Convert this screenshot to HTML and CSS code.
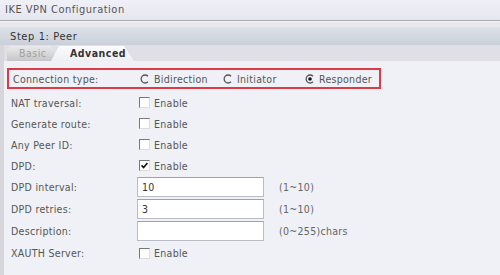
FILE: index.html
```html
<!DOCTYPE html>
<html>
<head>
<meta charset="utf-8">
<link rel="stylesheet" href="styles.css">
</head>
<body>
<div class="frame">
  <div class="titlebar">IKE VPN Configuration</div>
  <div class="band"></div>
  <div class="step">Step 1: Peer</div>
  <div class="tabs">
    <div class="tab basic">Basic</div>
    <div class="tab active">Advanced</div>
  </div>
  <div class="content">
    <div class="row hl">
      <div class="label">Connection type:</div>
      <div class="ctrl">
        <span class="opt w83"><svg class="radio" width="10" height="10" viewBox="0 0 10 10"><path d="M8 2.2A4 4 0 1 0 8 7.8" fill="none" stroke="#555" stroke-width="1.3"/></svg>Bidirection</span>
        <span class="opt w82"><svg class="radio" width="10" height="10" viewBox="0 0 10 10"><path d="M8 2.2A4 4 0 1 0 8 7.8" fill="none" stroke="#555" stroke-width="1.3"/></svg>Initiator</span>
        <span class="opt"><svg class="radio" width="10" height="10" viewBox="0 0 10 10"><path d="M8 2.2A4 4 0 1 0 8 7.8" fill="none" stroke="#555" stroke-width="1.3"/><circle cx="5" cy="5" r="1.8" fill="#111"/></svg>Responder</span>
      </div>
    </div>
    <div class="row">
      <div class="label">NAT traversal:</div>
      <div class="ctrl"><span class="cb"></span>Enable</div>
    </div>
    <div class="row">
      <div class="label">Generate route:</div>
      <div class="ctrl"><span class="cb"></span>Enable</div>
    </div>
    <div class="row">
      <div class="label">Any Peer ID:</div>
      <div class="ctrl"><span class="cb"></span>Enable</div>
    </div>
    <div class="row">
      <div class="label">DPD:</div>
      <div class="ctrl"><span class="cb on"><svg width="9" height="9" viewBox="0 0 9 9"><path d="M1.6 4.4L3.6 6.5L7.4 2" fill="none" stroke="#111" stroke-width="1.6"/></svg></span>Enable</div>
    </div>
    <div class="row tall">
      <div class="label">DPD interval:</div>
      <div class="ctrl"><span class="input">10</span><span class="hint">(1~10)</span></div>
    </div>
    <div class="row tall">
      <div class="label">DPD retries:</div>
      <div class="ctrl"><span class="input">3</span><span class="hint">(1~10)</span></div>
    </div>
    <div class="row tall">
      <div class="label">Description:</div>
      <div class="ctrl"><span class="input"></span><span class="hint">(0~255)chars</span></div>
    </div>
    <div class="row tall">
      <div class="label">XAUTH Server:</div>
      <div class="ctrl"><span class="cb"></span>Enable</div>
    </div>
  </div>
</div>
</body>
</html>
```
FILE: styles.css
```css
html, body {
  margin: 0;
  padding: 0;
}
body {
  width: 500px;
  height: 275px;
  overflow: hidden;
  background: #eff1f6;
  font-family: "DejaVu Sans Condensed", "DejaVu Sans", sans-serif;
  font-size: 10.5px;
  color: #555;
}
.frame {
  height: 275px;
  display: flex;
  flex-direction: column;
}
.titlebar {
  height: 20px;
  line-height: 20px;
  padding-left: 5px;
  background: linear-gradient(#f0f0f8, #e6e6f0);
  border-bottom: 1px solid #a8a8ac;
  color: #555;
  font-size: 11px;
  letter-spacing: 0.5px;
}
.band {
  height: 5px;
  background: #e8e8ee;
  border-top: 1px solid #f4f4f8;
}
.step {
  height: 18px;
  line-height: 19px;
  padding-left: 10px;
  background: linear-gradient(#dde1e8, #c9d0d9);
  color: #333;
  font-size: 11px;
  letter-spacing: 0.6px;
}
.tabs {
  height: 16px;
  background: #dfdfe5;
  display: flex;
  align-items: flex-end;
  padding-left: 7px;
  border-left: 4px solid #d6d6dc;
}
.tab {
  height: 15px;
  line-height: 15px;
  letter-spacing: 0.5px;
}
.tab.basic {
  width: 38px;
  padding-left: 12px;
  color: #a0a0a0;
  background: linear-gradient(#eaeaea, #c6c6ca);
  border-radius: 6px 0 0 0;
  clip-path: polygon(0 0, 44px 0, 50px 100%, 0 100%);
  margin-left: -4px;
}
.tab.active {
  width: 64px;
  padding-left: 19px;
  font-weight: bold;
  color: #333;
  background: linear-gradient(#fbfbfd, #eeeff3);
  clip-path: polygon(8px 0, 73px 0, 83px 100%, 0 100%);
  margin-left: -6px;
}
.content {
  flex: 1;
  padding: 7px 0 0 7px;
  border-left: 4px solid #d6d6dc;
}
.row {
  display: flex;
  align-items: center;
  height: 21px;
}
.row.tall {
  height: 22px;
}
.row.hl {
  width: 370px;
  height: 17px;
  border: 2px solid #dc3a44;
  margin-left: -4px;
  margin-bottom: 3px;
}
.row.hl .label {
  padding-left: 4px;
}
.label {
  width: 127px;
  color: #555;
  letter-spacing: 0.3px;
}
.ctrl {
  display: flex;
  align-items: center;
  color: #555;
  letter-spacing: 0.3px;
}
.opt {
  display: flex;
  align-items: center;
}
.opt.w83 { width: 83px; }
.opt.w82 { width: 82px; }
.radio {
  margin-right: 4px;
}
.cb {
  width: 9px;
  height: 9px;
  border: 1px solid #777;
  border-right-color: #ddd;
  border-bottom-color: #ddd;
  background: #fff;
  margin-right: 4px;
  margin-left: 1px;
  display: flex;
  align-items: center;
  justify-content: center;
}
.cb svg {
  display: block;
}
.input {
  width: 121px;
  height: 18px;
  line-height: 19px;
  border: 1px solid #b8bcc4;
  border-top-color: #9ea2aa;
  background: #fff;
  padding-left: 4px;
  color: #333;
  margin-left: -1px;
}
.hint {
  margin-left: 15px;
  color: #666;
}
```
